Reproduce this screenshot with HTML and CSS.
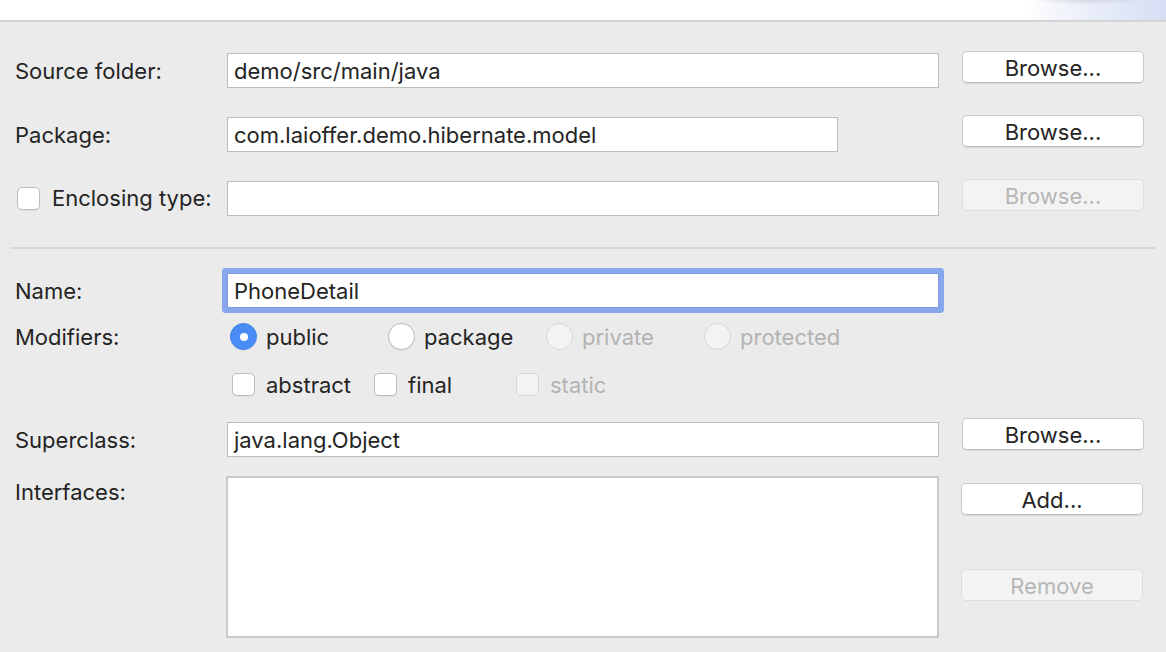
FILE: index.html
```html
<!DOCTYPE html>
<html lang="en">
<head>
<meta charset="utf-8">
<title>New Java Class</title>
<link rel="stylesheet" href="styles.css">
</head>
<body>
<header class="banner"><div class="banner-art"></div></header>
<main class="form">
  <div class="row">
    <div class="label">Source folder:</div>
    <div class="cell"><div class="field">demo/src/main/java</div></div>
    <button class="btn">Browse...</button>
  </div>
  <div class="row">
    <div class="label">Package:</div>
    <div class="cell"><div class="field short">com.laioffer.demo.hibernate.model</div></div>
    <button class="btn">Browse...</button>
  </div>
  <div class="row row-tall">
    <div class="label check-label"><span class="check"></span>Enclosing type:</div>
    <div class="cell"><div class="field"></div></div>
    <button class="btn disabled">Browse...</button>
  </div>
  <div class="sep"></div>
  <div class="row row-name">
    <div class="label">Name:</div>
    <div class="cell"><div class="field focus">PhoneDetail</div></div>
  </div>
  <div class="row row-mod">
    <div class="label">Modifiers:</div>
    <div class="radios">
      <div class="opt"><span class="radio on"></span>public</div>
      <div class="opt"><span class="radio"></span>package</div>
      <div class="opt off"><span class="radio"></span>private</div>
      <div class="opt off"><span class="radio"></span>protected</div>
    </div>
  </div>
  <div class="row row-checks">
    <div class="label"></div>
    <div class="checks">
      <div class="copt"><span class="check"></span>abstract</div>
      <div class="copt"><span class="check"></span>final</div>
      <div class="copt off"><span class="check"></span>static</div>
    </div>
  </div>
  <div class="row row-super">
    <div class="label">Superclass:</div>
    <div class="cell"><div class="field">java.lang.Object</div></div>
    <button class="btn">Browse...</button>
  </div>
  <div class="row row-ifaces">
    <div class="label">Interfaces:</div>
    <div class="list"></div>
    <div class="btn-col">
      <button class="btn">Add...</button>
      <button class="btn disabled remove">Remove</button>
    </div>
  </div>
</main>
</body>
</html>
```
FILE: styles.css
```css
* { box-sizing: border-box; }
html, body { margin: 0; padding: 0; }
body {
  width: 1166px;
  height: 652px;
  overflow: hidden;
  background: #ebebeb;
  font-family: Inter, "Noto Sans", "Liberation Sans", sans-serif;
  font-size: 22px;
  color: #242424;
}
.banner {
  height: 22px;
  background: #ffffff;
  border-bottom: 2px solid #d5d5d5;
  display: flex;
  justify-content: flex-end;
}
.banner-art {
  width: 140px;
  height: 20px;
  background:
    radial-gradient(ellipse 60px 5px at 45% 0, rgba(190,190,200,0.45), rgba(255,255,255,0) 100%),
    linear-gradient(to right, #ffffff 0%, #eef1fa 35%, #d5def4 100%);
}
.form { padding: 29px 10px 0 10px; }
.row {
  display: flex;
  align-items: flex-start;
  height: 64px;
  padding-left: 5px;
}
.row-tall { height: 68px; }
.label {
  width: 212px;
  flex: none;
  height: 35px;
  margin-top: 2px;
  padding-top: 1px;
  line-height: 35px;
  white-space: nowrap;
}
.check-label { display: flex; align-items: center; padding-left: 2px; padding-top: 0; }
.check-label .check { margin-right: 12px; }
.cell {
  flex: none;
  width: 712px;
  margin-top: 2px;
}
.field {
  width: 712px;
  height: 35px;
  background: #ffffff;
  border: 1px solid #bdbdbd;
  padding: 1px 6px 0 6px;
  line-height: 33px;
  white-space: nowrap;
}
.field.short { width: 611px; }
.btn {
  flex: none;
  margin-left: 23px;
  width: 182px;
  height: 32px;
  background: #ffffff;
  border: 1px solid #cacaca;
  border-bottom-color: #b9b9b9;
  border-radius: 5px;
  box-shadow: 0 1px 1px rgba(0,0,0,0.08);
  font: inherit;
  color: #242424;
  line-height: 28px;
  padding: 1px 0 0 0;
  text-align: center;
}
.btn.disabled {
  background: #f3f3f3;
  border-color: #dddddd;
  box-shadow: none;
  color: #b6b6b6;
}
.sep {
  height: 2px;
  background: #d8d8d8;
}
.row-name { height: auto; margin-top: 24px; }
.row-name .label, .row-name .cell { margin-top: 0; }
.field.focus {
  border-color: #7b9be0;
  border-radius: 1px;
  box-shadow: 0 0 0 5px #88a8eb;
}
.row-mod { height: 27px; margin-top: 15px; }
.row-mod .label { height: 27px; line-height: 27px; margin-top: 0; }
.radios { display: flex; padding-left: 3px; }
.opt {
  width: 158px;
  display: flex;
  align-items: center;
  height: 27px;
  padding-top: 1px;
  white-space: nowrap;
}
.radio {
  width: 27px;
  height: 27px;
  border-radius: 50%;
  background: #ffffff;
  border: 1px solid #b9b9b9;
  box-shadow: 0 1px 1px rgba(0,0,0,0.06);
  margin-right: 9px;
  margin-top: -1px;
  flex: none;
  position: relative;
}
.radio.on {
  background: #4a8cf6;
  border-color: #3f80ea;
}
.radio.on::after {
  content: "";
  position: absolute;
  left: 50%;
  top: 50%;
  width: 8px;
  height: 8px;
  margin: -4px 0 0 -4px;
  border-radius: 50%;
  background: #ffffff;
}
.off { color: #b3b3b3; }
.off .radio, .off .check {
  background: #f3f3f3;
  border-color: #d6d6d6;
  box-shadow: none;
}
.row-checks { height: 23px; margin-top: 23px; }
.row-checks .label { height: 23px; margin-top: 0; }
.checks { display: flex; padding-left: 5px; }
.copt {
  width: 142px;
  display: flex;
  align-items: center;
  height: 23px;
  white-space: nowrap;
}
.check {
  width: 23px;
  height: 23px;
  flex: none;
  background: #ffffff;
  border: 1px solid #bcbcbc;
  border-radius: 5px;
  box-shadow: 0 1px 1px rgba(0,0,0,0.06);
}
.copt .check { margin-right: 11px; }
.row-super { height: auto; margin-top: 22px; }
.row-super .label, .row-super .cell { margin-top: 4px; }
.row-ifaces { height: auto; margin-top: 19px; }
.row-ifaces .label { margin-top: 0; height: 30px; line-height: 30px; }
.list {
  flex: none;
  width: 713px;
  height: 162px;
  margin-left: -1px;
  background: #ffffff;
  border: 2px solid #c8c8c8;
}
.btn-col { display: flex; flex-direction: column; margin-left: 22px; }
.btn-col .btn { margin-left: 0; margin-top: 7px; }
.btn-col .remove { margin-top: 54px; }
```
